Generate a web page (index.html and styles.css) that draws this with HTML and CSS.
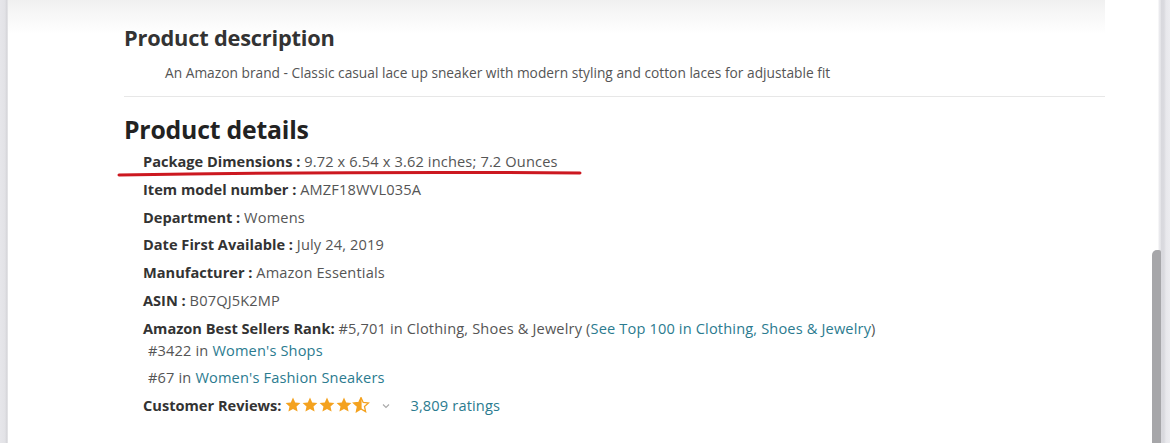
FILE: index.html
```html
<!DOCTYPE html>
<html lang="en">
<head>
<meta charset="utf-8">
<title>Product details</title>
<link rel="stylesheet" href="styles.css">
</head>
<body>
<div class="frame">
  <div class="edge"></div>
  <main class="page">
    <section class="desc">
      <h2 class="desc-title">Product description</h2>
      <p class="desc-text">An Amazon brand - Classic casual lace up sneaker with modern styling and cotton laces for adjustable fit</p>
    </section>
    <hr class="divider">
    <section class="details">
      <h2 class="details-title">Product details</h2>
      <ul class="rows">
        <li class="row marked"><span class="label">Package Dimensions :</span> <span class="val">9.72 x 6.54 x 3.62 inches; 7.2 Ounces</span>
          <svg class="underline" width="466" height="7" viewBox="0 0 466 7"><path d="M2 5 C 120 3.2, 320 1.8, 463 3" fill="none" stroke="#cc1820" stroke-width="3" stroke-linecap="round"/></svg>
        </li>
        <li class="row"><span class="label">Item model number :</span> <span class="val">AMZF18WVL035A</span></li>
        <li class="row"><span class="label">Department :</span> <span class="val">Womens</span></li>
        <li class="row"><span class="label">Date First Available :</span> <span class="val">July 24, 2019</span></li>
        <li class="row"><span class="label">Manufacturer :</span> <span class="val">Amazon Essentials</span></li>
        <li class="row"><span class="label">ASIN :</span> <span class="val">B07QJ5K2MP</span></li>
        <li class="row rank"><span class="label">Amazon Best Sellers Rank:</span> <span class="val">#5,701 in Clothing, Shoes &amp; Jewelry (<a class="link">See Top 100 in Clothing, Shoes &amp; Jewelry</a>)</span>
          <ul class="sub">
            <li class="sub-row first"><span class="val">#3422 in <a class="link">Women's Shops</a></span></li>
            <li class="sub-row"><span class="val">#67 in <a class="link">Women's Fashion Sneakers</a></span></li>
          </ul>
        </li>
        <li class="row reviews"><span class="label">Customer Reviews:</span>
          <svg class="stars" width="88" height="16" viewBox="0 0 88 16">
            <defs>
              <path id="st" d="M8 0.6 L10.2 5.4 L15.4 5.9 L11.5 9.4 L12.6 14.6 L8 11.9 L3.4 14.6 L4.5 9.4 L0.6 5.9 L5.8 5.4 Z"/>
              <clipPath id="half"><rect x="0" y="0" width="8.6" height="16"/></clipPath>
            </defs>
            <use href="#st" x="0" fill="#f4a21f"/>
            <use href="#st" x="17" fill="#f4a21f"/>
            <use href="#st" x="34" fill="#f4a21f"/>
            <use href="#st" x="51" fill="#f4a21f"/>
            <g transform="translate(68 0)">
              <use href="#st" fill="none" stroke="#f4a21f" stroke-width="1.3"/>
              <use href="#st" fill="#f4a21f" clip-path="url(#half)"/>
            </g>
          </svg>
          <svg class="chev" width="8" height="6" viewBox="0 0 8 6"><path d="M1 1.5 L4 4.5 L7 1.5" fill="none" stroke="#a9a9a9" stroke-width="1.1"/></svg>
          <a class="link ratings">3,809 ratings</a>
        </li>
      </ul>
    </section>
  </main>
  <div class="scrollbar">
    <div class="gutter"><div class="thumb"></div></div>
    <div class="track"></div>
  </div>
</div>
</body>
</html>
```
FILE: styles.css
```css
* { box-sizing: border-box; }
html, body { margin: 0; padding: 0; background: #fff; }
body {
  font-family: "Open Sans", "Liberation Sans", sans-serif;
  color: #333;
  width: 1170px;
  height: 443px;
  overflow: hidden;
}
.frame {
  display: flex;
  height: 443px;
}
.edge {
  width: 8px;
  flex: none;
  background: linear-gradient(to right, #e6e6ea 0, #e2e2e6 5px, #d4d4d8 7px, #f0f0f2 8px);
}
.page {
  flex: none;
  width: 1097px;
  padding-left: 116px;
  background: linear-gradient(to bottom, #f0f0f0 0, #f7f7f7 14px, #ffffff 34px);
}
.desc { padding-top: 25px; }
.desc-title {
  margin: 0;
  font-size: 21.8px;
  line-height: 26px;
  font-weight: 700;
  color: #333;
  letter-spacing: -0.2px;
}
.desc-text {
  margin: 13px 0 0;
  padding-left: 41px;
  font-size: 13.75px;
  line-height: 18px;
  color: #555;
}
.divider {
  margin: 14px 0 0;
  border: 0;
  border-top: 1px solid #e7e7e7;
  height: 0;
}
.details-title {
  margin: 17px 0 0;
  font-size: 24.8px;
  line-height: 30px;
  font-weight: 700;
  color: #222;
  letter-spacing: -0.2px;
}
.rows {
  list-style: none;
  margin: 7px 0 0;
  padding: 0 0 0 19px;
}
.row {
  font-size: 14.6px;
  line-height: 20px;
  margin-bottom: 7.75px;
  white-space: nowrap;
}
.val { letter-spacing: 0.15px; }
.marked { position: relative; }
.underline {
  position: absolute;
  left: -26px;
  top: 19px;
}
.label { font-weight: 700; color: #333; }
.val { color: #555; }
.link { color: #2b7b8f; text-decoration: none; }
.sub {
  list-style: none;
  margin: 2.5px 0 0;
  padding: 0 0 0 5px;
}
.sub-row { line-height: 20px; margin-top: 7px; }
.sub-row.first { margin-top: 0; }
.rank { margin-bottom: 8px; }
.reviews {
  display: flex;
  align-items: center;
}
.stars { margin-left: 4px; }
.chev { margin-left: 9px; margin-top: 1px; }
.ratings { margin-left: 20px; letter-spacing: 0.15px; }
.scrollbar {
  flex: none;
  width: 65px;
  display: flex;
  justify-content: flex-end;
  background: #fff;
}
.gutter {
  width: 9px;
  display: flex;
  flex-direction: column;
  background: linear-gradient(to right, #ffffff 0, #ffffff 6px, #ececef 7px, #e2e2e6 9px);
}
.thumb {
  margin-top: auto;
  height: 193px;
  background: #a6a6a9;
  border-radius: 5px 2px 0 0;
}
.track {
  width: 9px;
  background: linear-gradient(to right, #d8d8dd 0, #dadadf 3px, #e8e8ec 5px, #ececf0 9px);
}
```
